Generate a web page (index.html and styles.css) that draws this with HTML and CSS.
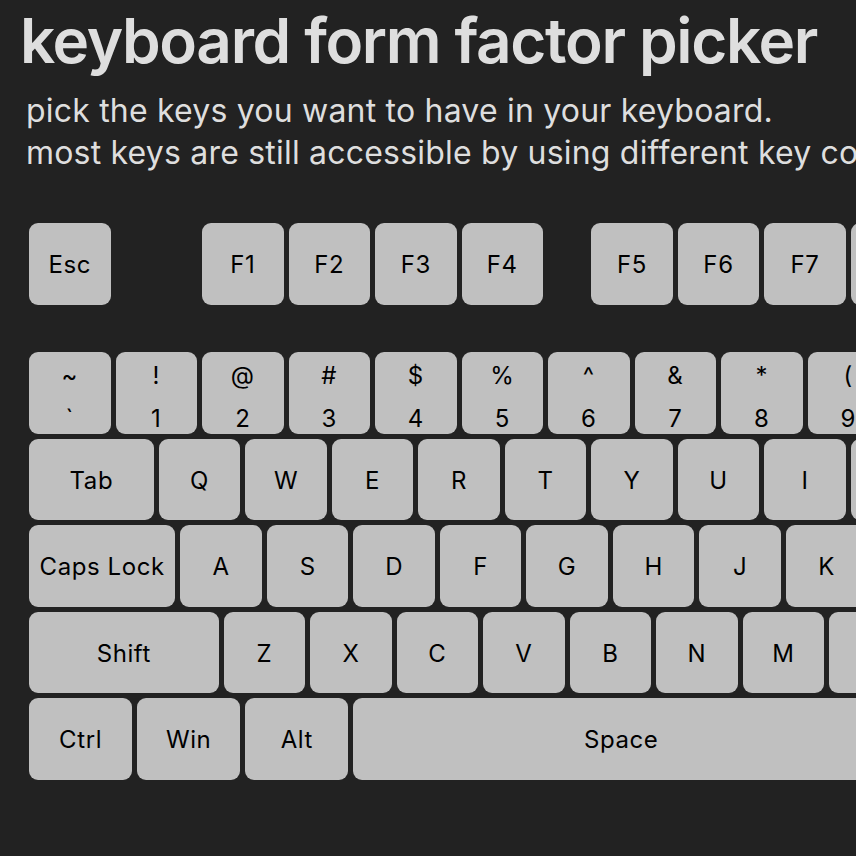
FILE: index.html
```html
<!DOCTYPE html>
<html lang="en">
<head>
<meta charset="utf-8">
<title>keyboard form factor picker</title>
<link rel="stylesheet" href="styles.css">
</head>
<body>
<main class="page">
  <h1 class="title">keyboard form factor picker</h1>
  <p class="intro">pick the keys you want to have in your keyboard.<br>most keys are still accessible by using different key combinations.</p>

  <section class="keyboard">
    <div class="row row-fn">
      <div class="key">Esc</div>
      <div class="key gap-1">F1</div>
      <div class="key">F2</div>
      <div class="key">F3</div>
      <div class="key">F4</div>
      <div class="key gap-half">F5</div>
      <div class="key">F6</div>
      <div class="key">F7</div>
      <div class="key">F8</div>
      <div class="key gap-half">F9</div>
      <div class="key">F10</div>
      <div class="key">F11</div>
      <div class="key">F12</div>
    </div>

    <div class="block">
      <div class="row">
        <div class="key dual"><span>~</span><span>`</span></div>
        <div class="key dual"><span>!</span><span>1</span></div>
        <div class="key dual"><span>@</span><span>2</span></div>
        <div class="key dual"><span>#</span><span>3</span></div>
        <div class="key dual"><span>$</span><span>4</span></div>
        <div class="key dual"><span>%</span><span>5</span></div>
        <div class="key dual"><span>^</span><span>6</span></div>
        <div class="key dual"><span>&amp;</span><span>7</span></div>
        <div class="key dual"><span>*</span><span>8</span></div>
        <div class="key dual"><span>(</span><span>9</span></div>
        <div class="key dual"><span>)</span><span>0</span></div>
        <div class="key dual"><span>_</span><span>-</span></div>
        <div class="key dual"><span>+</span><span>=</span></div>
        <div class="key w2">Backspace</div>
      </div>
      <div class="row">
        <div class="key w15">Tab</div>
        <div class="key">Q</div>
        <div class="key">W</div>
        <div class="key">E</div>
        <div class="key">R</div>
        <div class="key">T</div>
        <div class="key">Y</div>
        <div class="key">U</div>
        <div class="key">I</div>
        <div class="key">O</div>
        <div class="key">P</div>
        <div class="key dual"><span>{</span><span>[</span></div>
        <div class="key dual"><span>}</span><span>]</span></div>
        <div class="key w15 dual"><span>|</span><span>\</span></div>
      </div>
      <div class="row">
        <div class="key w175">Caps Lock</div>
        <div class="key">A</div>
        <div class="key">S</div>
        <div class="key">D</div>
        <div class="key">F</div>
        <div class="key">G</div>
        <div class="key">H</div>
        <div class="key">J</div>
        <div class="key">K</div>
        <div class="key">L</div>
        <div class="key dual"><span>:</span><span>;</span></div>
        <div class="key dual"><span>"</span><span>'</span></div>
        <div class="key w225">Enter</div>
      </div>
      <div class="row">
        <div class="key w225">Shift</div>
        <div class="key">Z</div>
        <div class="key">X</div>
        <div class="key">C</div>
        <div class="key">V</div>
        <div class="key">B</div>
        <div class="key">N</div>
        <div class="key">M</div>
        <div class="key dual"><span>&lt;</span><span>,</span></div>
        <div class="key dual"><span>&gt;</span><span>.</span></div>
        <div class="key dual"><span>?</span><span>/</span></div>
        <div class="key w275">Shift</div>
      </div>
      <div class="row">
        <div class="key w125">Ctrl</div>
        <div class="key w125">Win</div>
        <div class="key w125">Alt</div>
        <div class="key w625">Space</div>
        <div class="key w125">Alt</div>
        <div class="key w125">Win</div>
        <div class="key w125">Menu</div>
        <div class="key w125">Ctrl</div>
      </div>
    </div>
  </section>
</main>
</body>
</html>
```

FILE: styles.css
```css
html, body {
  margin: 0;
  padding: 0;
  background: #222222;
  overflow: hidden;
}

.page {
  --u: 86.5px;
  width: 1400px;
  padding: 3px 0 0 20px;
  font-family: Inter, "Noto Sans", sans-serif;
  color: #dedede;
}

.title {
  margin: 0;
  font-size: 62px;
  line-height: 76px;
  font-weight: 600;
  letter-spacing: -1.35px;
}

.intro {
  margin: 11px 0 0 6px;
  font-size: 32px;
  line-height: 42px;
  font-weight: 400;
  letter-spacing: 0.2px;
  white-space: nowrap;
}

.keyboard {
  margin: 49px 0 0 9px;
  display: flex;
  flex-direction: column;
  gap: 47.5px;
}

.block {
  display: flex;
  flex-direction: column;
  gap: 5px;
}

.row {
  display: flex;
  gap: 5px;
}

.key {
  --n: 1;
  flex: 0 0 auto;
  box-sizing: border-box;
  width: calc(var(--u) * var(--n) - 5px);
  height: 81.5px;
  padding-top: 2px;
  background: #c0c0c0;
  border-radius: 9px;
  color: #000;
  font-size: 24px;
  letter-spacing: 0.6px;
  display: flex;
  align-items: center;
  justify-content: center;
}

.key.dual {
  flex-direction: column;
  justify-content: flex-start;
  padding-top: 10px;
  line-height: 28px;
  gap: 15px;
}

.gap-1 { margin-left: var(--u); }
.gap-half { margin-left: calc(var(--u) / 2); }

.w125 { --n: 1.25; }
.w15 { --n: 1.5; }
.w175 { --n: 1.75; }
.w2 { --n: 2; }
.w225 { --n: 2.25; }
.w275 { --n: 2.75; }
.w625 { --n: 6.25; }
```
